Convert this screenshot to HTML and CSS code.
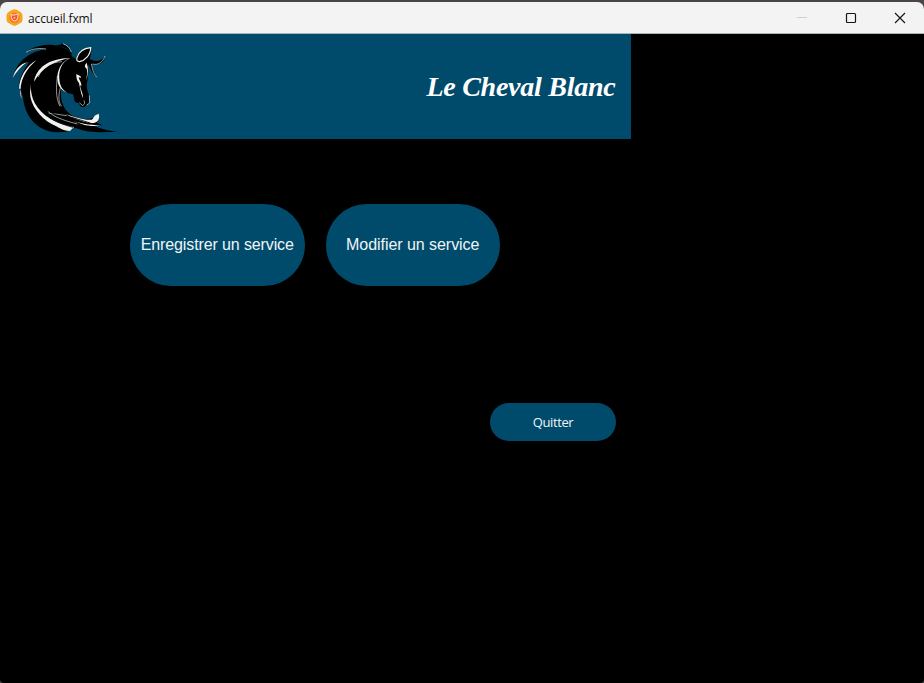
FILE: index.html
```html
<!DOCTYPE html>
<html lang="fr">
<head>
<meta charset="utf-8">
<title>accueil.fxml</title>
<link rel="stylesheet" href="styles.css">
</head>
<body>
<div class="window">
  <header class="titlebar">
    <svg class="app-icon" viewBox="0 0 17 17"><path d="M6.500 .8Q8.500-.4 10.500 .8L14.500 3Q16.500 4 16.500 6.500V10.500Q16.500 13 14.500 14L10.500 16.200Q8.500 17.400 6.500 16.200L2.500 14Q.5 13 .5 10.500V6.500Q.5 4 2.500 3Z" fill="#f9a51c"/><circle cx="8.500" cy="8.700" r="5.200" fill="#f47b2c"/><path d="M4.800 5.500L7.200 6.200L9.500 5.800L12.200 4.800L11.700 8.500Q11.600 11.700 8.700 12Q5.600 11.500 5.500 8.600Z" fill="#ec542d" stroke="#fff0df" stroke-width=".9"/><path d="M7.300 8L9.600 7.800L9.200 9.800H7.700Z" fill="#f8b57d"/></svg>
    <span class="file-name">accueil.fxml</span>
    <div class="controls">
      <svg viewBox="0 0 12 12"><path d="M1 5.500H11" stroke="#d0d0d0"/></svg>
      <svg viewBox="0 0 12 12"><rect x="1.500" y="1.500" width="9" height="9" rx="1" fill="none" stroke="#151515" stroke-width="1.200"/></svg>
      <svg viewBox="0 0 12 12"><path d="M1 1L11 11M11 1L1 11" stroke="#151515" stroke-width="1.150"/></svg>
    </div>
  </header>
  <main class="content">
    <section class="banner">
      <svg class="horse" viewBox="0 0 390 315">
        <g class="ink">
          <path d="M214 56C195 39 173 32 143 32C112 34 91 43 78 55C101 44 124 42 143 46C97 49 50 78 38 132C52 105 69 91 88 84C67 110 54 146 57 164L65 145C60 165 60 184 65 195L69 181C69 231 97 276 142 290C170 298 202 296 219 286C190 276 166 264 151 250C178 268 217 280 248 289C282 298 322 293 354 294C322 290 299 283 282 276L310 273C301 272 296 268 290 266C299 258 300 249 295 240C285 256 259 258 233 251C201 241 178 214 184 165C191 173 203 178 219 181C222 190 222 198 225 204L236 207L243 219L254 219L260 212L269 208L267 183C261 169 258 155 262 142C264 126 266 116 265 104L264 91C272 103 275 119 292 131C281 116 280 103 272 88C291 98 316 87 315 66C306 81 289 86 269 74C275 59 274 49 273 40C249 44 232 57 228 75L215 66Z"/>
          <path d="M167 33C180 34 189 31 182 28C198 32 209 40 214 55C198 40 186 39 167 33Z"/>
        </g>
        <g class="light">
          <path d="M38 132C45 106 60 90 83 84C61 98 50 114 38 132ZM57 164C58 131 77 97 110 78C78 105 66 132 62 159L65 195C60 185 60 174 63 163Z"/>
          <path d="M102 143C109 103 144 73 212 72C161 80 125 103 102 143Z"/>
          <path d="M93 149C89 192 110 229 151 254C176 269 199 274 222 279L210 291C186 290 176 279 155 270C118 250 91 212 90 177Z"/>
          <path d="M211 72C185 83 173 112 179 143C182 159 188 168 204 177C179 170 171 149 172 127C174 101 190 79 211 72Z"/>
          <path d="M229 119C235 125 244 124 243 131L236 130C238 140 245 145 244 157L240 153C241 166 250 178 249 193C242 177 240 160 237 147C230 139 229 132 229 119ZM260 86C253 93 253 100 260 104C264 117 259 130 258 139C265 121 266 104 260 86Z"/>
          <path d="M296 239C303 260 286 270 269 266C245 263 219 252 196 240C228 251 253 259 275 257C284 252 275 247 296 239ZM220 260C242 269 275 274 301 273L283 276C258 275 235 270 220 260Z"/>
        </g>
        <path class="ear" d="M272 41C272 62 256 79 238 83C231 83 229 78 231 71C236 54 252 43 272 41Z"/>
        <path class="hair" d="M78 55C98 43 119 42 138 45M115 129C125 101 148 85 186 83M172 126C169 158 166 190 180 217M181 162C174 189 176 207 185 217M278 90C294 95 309 84 315 66M274 90C278 105 279 118 291 130M268 184L269 207L260 213M252 199L254 208L248 215L238 206M189 29C202 34 210 42 214 54M146 237L200 245M143 231C157 246 185 258 232 270"/>
        <path class="strands" d="M99 158C108 207 143 238 184 248S235 269 257 276M150 251C168 264 196 274 219 280M212 249L271 267"/>
      </svg>
      <h1>Le Cheval Blanc</h1>
    </section>
    <div class="services">
      <button class="service"><span class="register">Enregistrer un service</span></button>
      <button class="service"><span class="modify">Modifier un service</span></button>
    </div>
    <div class="exit-row"><button class="exit">Quitter</button></div>
  </main>
</div>
</body>
</html>
```
FILE: styles.css
```css
* { box-sizing: border-box; }
body { margin: 0; background: #4a4648; overflow: hidden; }
.window { width: 924px; height: 683px; padding-top: 2px; }
.titlebar { height: 32px; display: flex; align-items: center; padding-left: 6px; background: #f3f3f3; border-radius: 7px 7px 0 0; border-bottom: 1px solid #a8b5b7; }
.app-icon { width: 17px; height: 17px; }
.file-name { margin: 1px 0 0 5px; font: 12px "Open Sans", sans-serif; letter-spacing: -.12px; color: #111; }
.controls { margin-left: auto; display: flex; gap: 37px; padding-right: 18.5px; }
.controls svg { width: 12px; height: 12px; }
.content { height: 649px; background: #000; border-radius: 0 0 4px 4px; }
.banner { width: 630.5px; height: 105px; background: #004b6b; display: flex; align-items: center; justify-content: space-between; padding-right: 15px; }
.horse { width: 130px; height: 105px; }
.ink { fill: #000; }
.light { fill: #f3f2ed; }
.ear { fill: #000; stroke: #f3f2ed; stroke-width: 3.5; }
.hair { fill: none; stroke: #d7dcda; stroke-width: 2; }
.strands { fill: none; stroke: #000; stroke-width: 2.5; }
h1 { margin: 0; color: #fff; font: italic bold 28px "Liberation Serif", serif; letter-spacing: -.25px; white-space: nowrap; }
button { border: 0; padding: 0; color: #eff5f7; background: #004b6b; white-space: nowrap; }
.services { display: flex; gap: 21px; padding: 65px 0 0 130px; }
.service { width: 174.5px; height: 82px; border-radius: 41px; font: 16px "Liberation Sans", sans-serif; }
.register { letter-spacing: -.12px; }
.modify { letter-spacing: -.05px; }
.exit-row { width: 616px; display: flex; justify-content: flex-end; padding-top: 117px; }
.exit { width: 126px; height: 38px; border-radius: 19px; font: 13px "Open Sans", sans-serif; letter-spacing: -.4px; }
```
